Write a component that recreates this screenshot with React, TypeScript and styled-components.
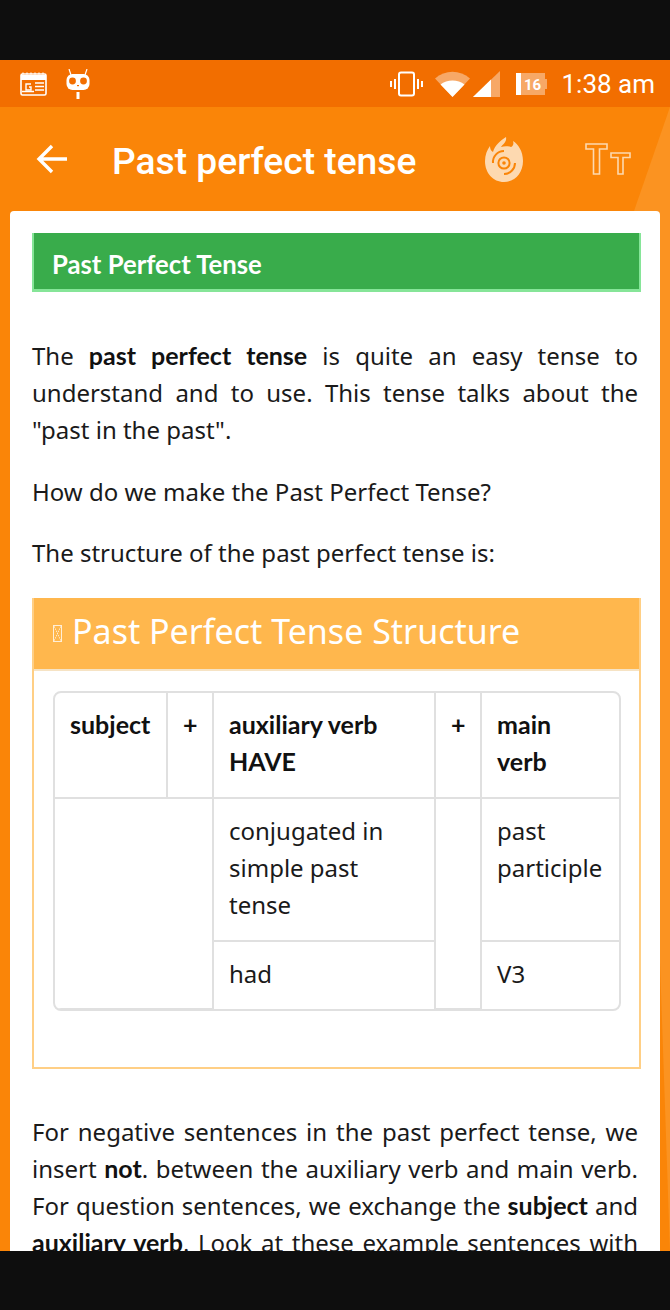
import styled, { createGlobalStyle } from "styled-components";

const Global = createGlobalStyle`
  html, body {
    margin: 0;
    padding: 0;
    background: #0e0e0e;
  }
`;

const Screen = styled.div`
  width: 670px;
  height: 1310px;
  display: flex;
  flex-direction: column;
  overflow: hidden;
  background: #0e0e0e;
`;

const BlackBar = styled.div<{ $h: number }>`
  flex: 0 0 ${(p) => p.$h}px;
  background: #0e0e0e;
`;

const StatusBar = styled.div`
  flex: 0 0 47px;
  display: flex;
  align-items: center;
  padding: 0 15px 0 20px;
  background: #f26e00;
  color: #fff;
`;

const StatusLeft = styled.div`
  display: flex;
  align-items: center;
  gap: 19px;
  flex: 1;
`;

const StatusRight = styled.div`
  display: flex;
  align-items: center;
`;

const Clock = styled.span`
  font: 400 26px "Roboto", sans-serif;
  margin-left: 14px;
  white-space: nowrap;
`;

const Gap = styled.span<{ $w: number }>`
  flex: 0 0 ${(p) => p.$w}px;
`;

const Body = styled.div`
  flex: 1;
  min-height: 0;
  display: flex;
  flex-direction: column;
  background: #fa8508;
  position: relative;
  overflow: hidden;
`;

const Streak = styled.div`
  position: absolute;
  inset: 0;
  background: #fb9321;
  clip-path: polygon(670px 0, 670px 1144px, 634px 104px);
`;

const AppBar = styled.header`
  flex: 0 0 104px;
  box-sizing: border-box;
  display: flex;
  align-items: center;
  position: relative;
  padding: 0 39px 0 36px;
`;

const Title = styled.h1`
  flex: 1;
  margin: 4px 0 0 44px;
  font: 500 37.2px "Roboto", sans-serif;
  color: #fff;
  white-space: nowrap;
`;

const FireButton = styled.div`
  display: flex;
  margin-right: 62px;
`;

const Card = styled.main`
  flex: 1;
  min-height: 0;
  margin: 0 10px;
  padding: 22px 19px 0 22px;
  background: #fff;
  border-radius: 4px 4px 0 0;
  overflow: hidden;
  position: relative;
  font: 400 24px/37px "Noto Sans", sans-serif;
  color: #1a1a1a;
`;

const GreenHeading = styled.h2`
  margin: 0 0 45px;
  height: 59px;
  box-sizing: border-box;
  display: flex;
  align-items: center;
  padding: 5px 0 0 18px;
  background: #39ac4b;
  border: solid #86e598;
  border-width: 0 2px 3px;
  color: #fff;
  font: 700 25.7px "Lato", sans-serif;
`;

const Para = styled.p<{ $justify?: boolean; $clipped?: boolean }>`
  margin: 0 3px 24.5px 0;
  text-align: ${(p) => (p.$justify ? "justify" : "left")};
  /* the last line runs on below the fold in the original */
  text-align-last: ${(p) => (p.$clipped ? "justify" : "auto")};
`;

const Strong = styled.strong`
  font: 700 25px/1 "Lato", sans-serif;
  color: #111;
`;

const Panel = styled.section`
  margin: 27px 0 44px;
  height: 471px;
  box-sizing: border-box;
  border: solid #ffcf85;
  border-width: 0 2px 2px;
`;

const PanelHead = styled.div`
  height: 73px;
  box-sizing: border-box;
  padding: 0 0 5px 19px;
  display: flex;
  align-items: center;
  gap: 10px;
  background: #ffb74d;
  border-bottom: 2px solid #f6e3c4;
  color: #fff;
  font: 400 34px "Noto Sans", sans-serif;
  white-space: nowrap;
`;

const MissingGlyph = styled.span`
  width: 9px;
  height: 17px;
  margin-top: 4px;
  box-sizing: border-box;
  border: 1px solid #ffeed6;
  background:
    linear-gradient(to top right, transparent 46%, #ffeed6 50%, transparent 54%),
    linear-gradient(to bottom right, transparent 46%, #ffeed6 50%, transparent 54%);
`;

const TableWrap = styled.div`
  margin: 20px 18px 0 19px;
  border: 2px solid #e0e0e0;
  border-radius: 8px;
  height: 320px;
  box-sizing: border-box;
  overflow: hidden;
`;

const Table = styled.table`
  width: 100%;
  height: 100%;
  border-collapse: collapse;
  table-layout: fixed;
`;

const Row = styled.tr<{ $h: number }>`
  height: ${(p) => p.$h}px;
`;

const Cell = styled.td<{ $bold?: boolean }>`
  border: 2px solid #e0e0e0;
  padding: 13px 15px 0;
  vertical-align: top;
  font-family: ${(p) => (p.$bold ? '"Lato"' : '"Noto Sans"')}, sans-serif;
  font-size: ${(p) => (p.$bold ? 25 : 24)}px;
  font-weight: ${(p) => (p.$bold ? 700 : 400)};
  color: ${(p) => (p.$bold ? "#111" : "#1a1a1a")};

  tr:first-child > & {
    border-top: 0;
  }
  tr:last-child > & {
    border-bottom: 0;
  }
  &:first-child {
    border-left: 0;
  }
  &:last-child {
    border-right: 0;
  }
`;

const CalendarIcon = () => (
  <svg width="27" height="25" viewBox="0 0 27 25" fill="none" stroke="#fff">
    <rect x="1" y="3" width="25" height="21" rx="1.5" strokeWidth="1.6" />
    <path d="M1 4h25v5H1z" fill="#fff" stroke="none" />
    <path d="M3 1.5v2M7 1.5v2M11 1.5v2M15 1.5v2M19 1.5v2M23 1.5v2" strokeWidth="1.2" />
    <path d="M15 12h9M15 15.5h9M15 19h9M2 20.5h12" strokeWidth="1.4" />
    <path d="M11 13h-5v6h5v-3h-2" strokeWidth="1.4" />
  </svg>
);

const BotIcon = () => (
  <svg width="24" height="30" viewBox="0 0 24 30">
    <path d="M3 0l2 6M21 0l-2 6" stroke="#fff" strokeWidth="1.2" />
    <rect x="0.5" y="5" width="23" height="16" rx="6" fill="#fff" />
    <circle cx="6.5" cy="12" r="3.4" fill="#f26e00" />
    <circle cx="17.5" cy="12" r="3.4" fill="#f26e00" />
    <rect x="11" y="16" width="2" height="1.2" fill="#f26e00" />
    <rect x="10.5" y="23" width="3" height="7" fill="#fff" />
  </svg>
);

const VibrateIcon = () => (
  <svg width="33" height="26" viewBox="0 0 33 26" fill="none" stroke="#fff">
    <rect x="9" y="1.5" width="15" height="23" rx="2" strokeWidth="2" />
    <path d="M5 8v10M1 10v6M28 8v10M32 10v6" strokeWidth="2" />
  </svg>
);

const WifiIcon = () => (
  <svg width="35" height="26" viewBox="0 0 35 26">
    <path d="M0 7.5C10 -1.5 25 -1.5 35 7.5L17.5 26z" fill="#fff" fillOpacity="0.4" />
    <path d="M5.5 13.5C12 8 23 8 29.5 13.5L17.5 26z" fill="#fff" />
  </svg>
);

const SignalIcon = () => (
  <svg width="27" height="26" viewBox="0 0 27 26">
    <path d="M0 26L27 0v26z" fill="#fff" fillOpacity="0.4" />
    <path d="M0 26L18 8.5V26z" fill="#fff" />
  </svg>
);

const BatteryIcon = () => (
  <svg width="31" height="24" viewBox="0 0 31 24">
    <rect x="0" y="1" width="5" height="22" fill="#fff" />
    <rect x="5" y="1" width="24" height="22" fill="#fff" fillOpacity="0.4" />
    <rect x="29" y="7" width="2" height="10" fill="#fff" fillOpacity="0.4" />
    <text x="16.5" y="18" textAnchor="middle" fill="#fff" fontFamily="Roboto" fontWeight="700" fontSize="15">
      16
    </text>
  </svg>
);

const BackIcon = () => (
  <svg width="32" height="30" viewBox="0 0 32 30" fill="none" stroke="#fff" strokeWidth="3.4">
    <path d="M31 15H3M16 2L3 15l13 13" />
  </svg>
);

const FireIcon = () => (
  <svg width="38" height="45" viewBox="0 0 38 45" fill="none">
    <path
      d="M21 0c1 5-3 7-5 10 3-1 7-1 10 0 2-1 3-3 2-6 5 3 10 10 10 20 0 12-8 21-19 21S0 36 0 24C0 18 2 13 5 9c0 3 1 5 3 6 2-7 7-11 13-15z"
      fill="#fdd9b0"
    />
    <path d="M8 26a11 11 0 0 1 11-12" stroke="#fa8508" strokeWidth="2" />
    <path d="M30 26a11 11 0 0 1-11 11" stroke="#fa8508" strokeWidth="2" />
    <circle cx="19" cy="26" r="5.6" stroke="#fa8508" strokeWidth="2" />
    <circle cx="19" cy="26" r="1.8" fill="#fa8508" />
  </svg>
);

const FontSizeIcon = () => (
  <svg width="46" height="32" viewBox="0 0 46 32" fill="none" stroke="#fdd9b0" strokeWidth="1.6">
    <path d="M1 1h21v5h-7.5v25h-6V6H1z" />
    <path d="M26 10h19v4.5h-7V31h-5V14.5h-7z" />
  </svg>
);

export default function App() {
  return (
    <Screen>
      <Global />
      <BlackBar $h={60} />
      <StatusBar>
        <StatusLeft>
          <CalendarIcon />
          <BotIcon />
        </StatusLeft>
        <StatusRight>
          <VibrateIcon />
          <Gap $w={12} />
          <WifiIcon />
          <Gap $w={3} />
          <SignalIcon />
          <Gap $w={16} />
          <BatteryIcon />
          <Clock>1:38 am</Clock>
        </StatusRight>
      </StatusBar>
      <Body>
        <Streak />
        <AppBar>
          <BackIcon />
          <Title>Past perfect tense</Title>
          <FireButton>
            <FireIcon />
          </FireButton>
          <FontSizeIcon />
        </AppBar>
        <Card>
          <GreenHeading>Past Perfect Tense</GreenHeading>
          <Para $justify>
            The <Strong>past perfect tense</Strong> is quite an easy tense to understand and to use. This tense talks
            about the "past in the past".
          </Para>
          <Para>How do we make the Past Perfect Tense?</Para>
          <Para>The structure of the past perfect tense is:</Para>
          <Panel>
            <PanelHead>
              <MissingGlyph />
              Past Perfect Tense Structure
            </PanelHead>
            <TableWrap>
              <Table>
                <colgroup>
                  <col style={{ width: 112 }} />
                  <col style={{ width: 46 }} />
                  <col style={{ width: 222 }} />
                  <col style={{ width: 46 }} />
                  <col />
                </colgroup>
                <tbody>
                  <Row $h={105}>
                    <Cell $bold>subject</Cell>
                    <Cell $bold>+</Cell>
                    <Cell $bold>auxiliary verb HAVE</Cell>
                    <Cell $bold>+</Cell>
                    <Cell $bold>main verb</Cell>
                  </Row>
                  <Row $h={143}>
                    <Cell colSpan={2} rowSpan={2} />
                    <Cell>conjugated in simple past tense</Cell>
                    <Cell rowSpan={2} />
                    <Cell>past participle</Cell>
                  </Row>
                  <Row $h={68}>
                    <Cell>had</Cell>
                    <Cell>V3</Cell>
                  </Row>
                </tbody>
              </Table>
            </TableWrap>
          </Panel>
          <Para $justify $clipped>
            For negative sentences in the past perfect tense, we insert <Strong>not</Strong>. between the auxiliary verb
            and main verb. For question sentences, we exchange the <Strong>subject</Strong> and{" "}
            <Strong>auxiliary verb</Strong>. Look at these example sentences with
          </Para>
        </Card>
      </Body>
      <BlackBar $h={59} />
    </Screen>
  );
}
